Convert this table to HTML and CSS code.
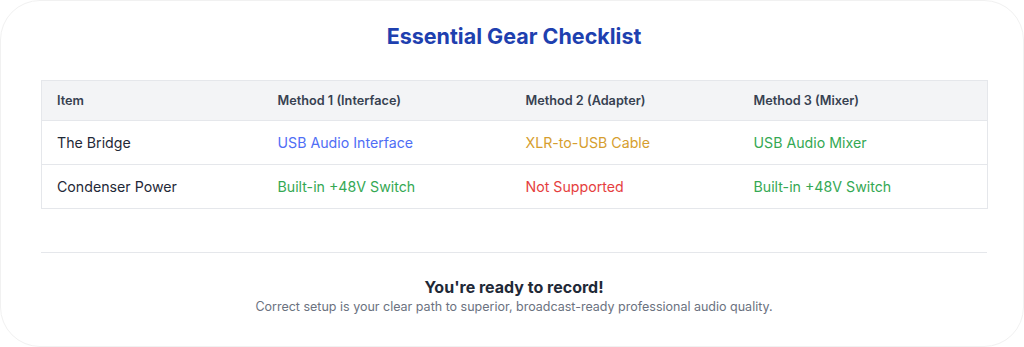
FILE: index.html
```html
<!DOCTYPE html>
<html lang="en">
<head>
<meta charset="utf-8">
<title>Essential Gear Checklist</title>
<link rel="stylesheet" href="styles.css">
</head>
<body>
<div class="card">
  <h2 class="title">Essential Gear Checklist</h2>
  <table class="gear">
    <colgroup>
      <col class="c1"><col class="c2"><col class="c3"><col class="c4">
    </colgroup>
    <thead>
      <tr><th>Item</th><th>Method 1 (Interface)</th><th>Method 2 (Adapter)</th><th>Method 3 (Mixer)</th></tr>
    </thead>
    <tbody>
      <tr><td>The Bridge</td><td class="blue">USB Audio Interface</td><td class="amber">XLR-to-USB Cable</td><td class="green">USB Audio Mixer</td></tr>
      <tr><td>Condenser Power</td><td class="green">Built-in +48V Switch</td><td class="red">Not Supported</td><td class="green">Built-in +48V Switch</td></tr>
    </tbody>
  </table>
  <div class="footer">
    <h3 class="ready">You're ready to record!</h3>
    <p class="note">Correct setup is your clear path to superior, broadcast-ready professional audio quality.</p>
  </div>
</div>
</body>
</html>
```

FILE: styles.css
```css
html, body {
  margin: 0;
  padding: 0;
  background: #ffffff;
}
body {
  font-family: Inter, "Noto Sans", sans-serif;
  color: #1f2937;
}
.card {
  box-sizing: border-box;
  width: 1024px;
  height: 347px;
  border: 1px solid #f1f1f1;
  border-radius: 40px;
  padding: 21px 36px 0 40px;
  background: #fff;
}
.title {
  margin: 0 0 30px;
  text-align: center;
  font-size: 21.5px;
  line-height: 28px;
  font-weight: 700;
  color: #1e40af;
}
.gear {
  width: 946px;
  border-collapse: collapse;
  border: 1px solid #e5e7eb;
  table-layout: fixed;
}
.c1 { width: 221px; }
.c2 { width: 248px; }
.c3 { width: 228px; }
.c4 { width: 249px; }
.gear th {
  background: #f3f4f6;
  text-align: left;
  font-size: 12.7px;
  font-weight: 600;
  color: #374151;
  height: 39px;
  padding: 0 15px;
  border-bottom: 1px solid #e5e7eb;
}
.gear td {
  font-size: 14.2px;
  height: 43px;
  padding: 0 15px;
  border-bottom: 1px solid #e5e7eb;
  color: #1f2937;
}
.gear .blue { color: #4f6ef5; }
.gear .amber { color: #d69e2e; }
.gear .red { color: #e53e3e; }
.gear .green { color: #34a853; }
.footer {
  margin-top: 43px;
  border-top: 1px solid #e5e7eb;
  width: 946px;
  text-align: center;
  padding-top: 24px;
}
.ready {
  margin: 0;
  font-size: 16px;
  line-height: 20px;
  font-weight: 700;
  color: #1f2937;
}
.note {
  margin: 2px 0 0;
  font-size: 12.5px;
  line-height: 16px;
  color: #6b7280;
}
```
